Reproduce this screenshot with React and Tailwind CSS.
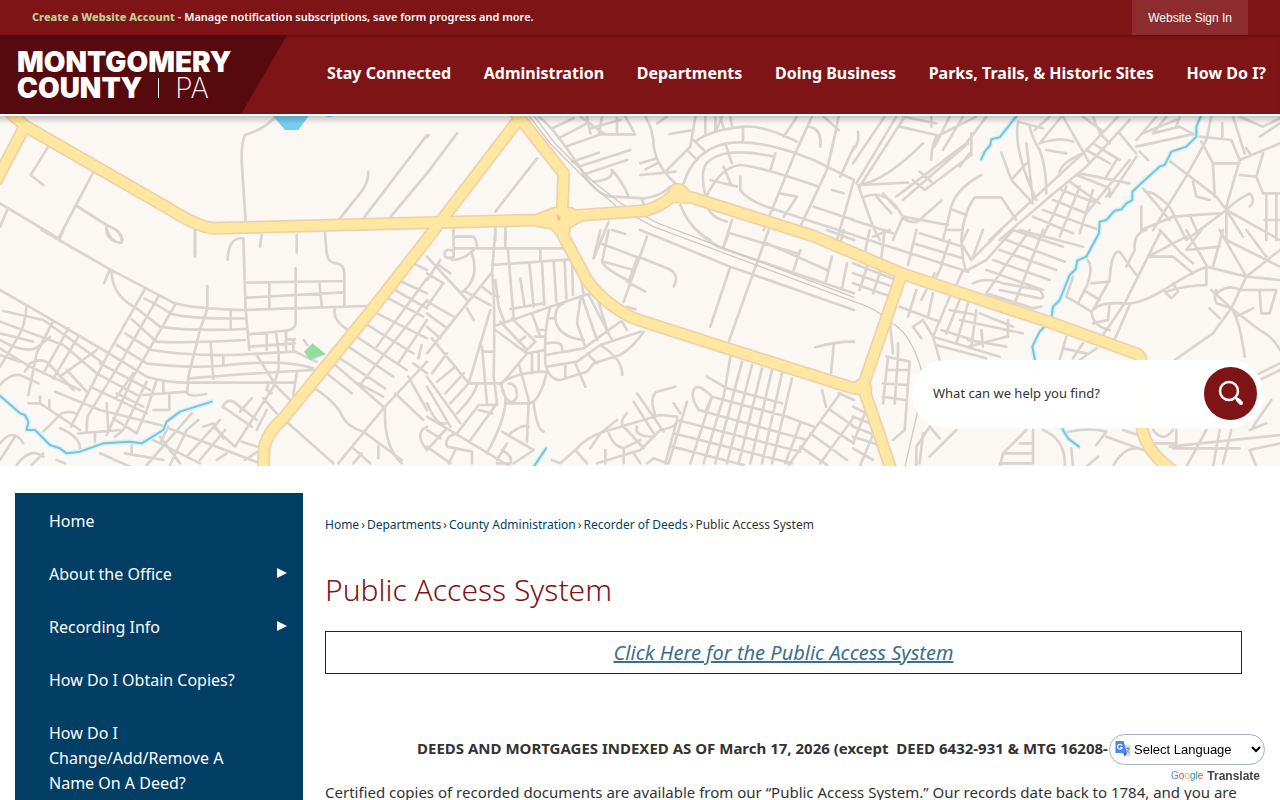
import React, { useState } from 'react';

const navItems = [
    'Stay Connected',
    'Administration',
    'Departments',
    'Doing Business',
    'Parks, Trails, & Historic Sites',
    'How Do I?',
];

const sideItems = [
    { label: 'Home' },
    { label: 'About the Office', hasChildren: true },
    { label: 'Recording Info', hasChildren: true },
    { label: 'How Do I Obtain Copies?' },
    { label: 'How Do I Change/Add/Remove A Name On A Deed?' },
];

const crumbs = ['Home', 'Departments', 'County Administration', 'Recorder of Deeds'];

// The street map is drawn in tiles, each with its own origin
const mapTiles = [
    {
        x: 0,
        y: 0,
        streets: `M145,440L92,525L130,555 M278,520L178,710 M230,618L320,675Q360,690 368,720 M320,680Q315,710 345,725 M0,610L180,718 M22,630L0,680
            M830,345Q800,385 735,405Q722,430 726,500L737,665 M1105,515Q1105,550 1080,580L1020,655 M1281,405L1090,655 M1281,520L1172,650 M585,690V770`,
    },
    {
        x: 1281,
        y: 0,
        streets: `M335,350Q380,380 470,520Q510,590 560,590L650,595Q700,590 730,560 M375,385L440,355 M395,415L480,370 M415,440L530,400L460,350 M435,485L515,458 M455,500L610,450
            M465,525L600,480 M500,545Q560,540 555,510 M555,510Q590,550 605,590 M645,595L650,615 M480,350L490,400 M525,350L515,405 M570,355V400 M490,385L580,360 M525,403H625 M595,350L620,395
            M655,350Q680,390 680,440Q690,500 745,550 M640,490L690,475 M655,508L690,490 M640,525L745,515 M690,370L720,350 M727,402L800,390 M805,350L790,440L720,510 M835,350V400
            M865,350V395 M880,350L890,385 M868,390L885,350 M910,350L915,380 M805,425Q850,390 950,380Q1010,375 1110,425 M948,380V420 M770,550Q800,450 900,430Q1000,415 1160,480L1281,540
            M835,585Q815,500 850,480Q900,440 1040,470 M800,420L830,450 M785,455L810,480 M835,595Q880,500 940,495Q1000,500 1170,558 M895,430L915,490 M890,500L910,550 M850,540L930,560
            M940,530V570Q960,600 1020,620L1140,660L1281,705 M1110,350L1070,410 M1155,350L1100,470L1010,690 M1045,460L1030,510 M1145,380Q1185,385 1180,440 M1235,350L1225,400L1200,510L1120,680
            M1190,350L1235,390 M1281,440L1240,530 M1060,580L1110,590L1070,650 M1160,620L1281,660 M1215,570L1250,580 M1281,540L1230,720 M760,615Q790,690 850,720 M835,585Q835,650 900,665
            M915,660L890,740 M330,475L205,635 M90,400L0,520 M5,405L0,412 M80,685V720 M205,680V720 M235,680V720 M545,665L500,775`,
    },
    {
        x: 2559,
        y: 0,
        streets: `M95,350L0,490 M130,350L10,550 M155,350L20,560 M150,350L250,370 M140,380L250,405 M235,350V380 M15,395Q20,430 0,450 M210,430Q100,540 20,555L165,548 M15,555L60,680L80,720
            M35,590Q90,570 130,620L150,650L120,720 M70,590L115,640 M90,580L130,625 M370,350L250,410Q235,440 235,480 M400,350L340,430L130,590 M290,350L245,440 M330,350L270,450 M355,400V465
            M345,430L150,600 M355,465L215,570L180,540 M200,515L235,545 M320,500L350,460 M385,525Q300,570 290,640L270,720 M265,602L210,650 M0,660L120,700 M150,650L285,675 M285,690H320
            M300,630L340,645 M325,720Q330,640 365,592H445L490,660 M150,655Q190,680 210,650 M495,365Q480,450 550,600 M495,365L570,385 M530,380Q540,420 560,450Q580,500 580,580 M520,430L540,600
            M445,458L475,540L540,610 M475,540L520,490 M795,350L690,460L560,580L410,720 M830,360L700,500L590,590L440,720 M590,350L545,390 M625,350L560,430 M630,350L710,490
            M560,430Q620,410 660,425 M690,350L750,395 M720,350Q735,400 770,430 M580,450L640,460 M620,520Q620,490 690,460 M720,430L800,480 M700,450L770,490 M740,400L770,430 M800,400L850,460
            M870,400L970,360 M850,440L1030,400 M850,470L770,590 M670,525L760,560Q780,570 760,590 M650,545L740,610 M625,570L720,605 M600,600L700,640 M570,630L740,690 M540,650L660,700
            M860,455L885,480 M830,480L700,640 M790,480L760,530 M680,560L620,710 M720,570L680,700 M640,560L570,710 M680,520L830,550 M910,350L850,420 M900,400L980,380L1025,405 M940,350L900,400
            M980,350L970,380 M1040,410L1135,420L1160,480 M1075,350L1060,420L1005,520L900,690 M1045,425L1080,490L1160,490 M1108,370V410 M1140,350L1175,460 M1220,410L1281,370
            M1281,430L1160,480L1120,620 M1180,445L1190,460 M1160,350L1230,380L1281,355 M1230,460L1210,530L1160,525 M1210,530L1230,580H1281 M1240,580V720 M1270,580V720
            M1190,620Q1210,600 1190,580Q1150,600 1120,630L1281,720 M880,575L900,580Q950,610 960,640 M940,475L1090,590L1120,630L1000,720 M1080,490L1085,590 M1020,545L1030,590L1070,600
            M865,620V690 M865,690L960,650L1100,640 M960,640L1000,720 M1010,645L1030,690 M1120,630L1170,710 M1120,630V720 M870,565L950,660 M1235,660H1281`,
    },
    {
        x: 0,
        y: 690,
        streets: `M125,0L330,118L520,218Q570,235 730,240L1100,228 M180,25L190,0 M320,0Q335,40 365,38Q365,10 350,0 M585,0V72 M683,90Q685,20 730,25L737,240L748,360 M780,50L785,15 M890,15V68
            M975,10L980,70Q985,100 1010,100Q1033,105 1033,130V225 M735,158L1033,153 M740,203L1030,187 M808,160V235 M887,115V280Q885,300 850,303L745,313 M958,155L965,230
            M622,168V235L600,300L565,440L562,490Q570,502 618,492 M330,118L312,160 M335,125Q335,190 400,230 M433,180L325,370L213,590 M475,200L360,400L262,560L260,605 M525,225L400,440L320,615
            M0,180L160,272L330,372L440,440Q500,458 565,458H885 M433,205Q500,240 510,250Q560,268 735,265 M410,235L480,290Q570,305 735,297 M395,268L470,335Q560,340 735,330
            M375,310L455,360Q560,378 700,375L885,365L950,395 M350,345L440,400Q560,415 660,408Q850,385 940,415 M570,445L735,432L940,420 M692,240V292 M632,340L640,445 M670,375V405 M748,350L885,340
            M800,310V360 M828,310Q840,380 835,420L820,470L705,650 M858,305V360 M880,330V360 M860,328H885 M770,375L830,470L870,510 M885,365L915,380 M912,330L922,345 M1005,235Q995,270 1045,300
            M10,243L130,270L200,320L310,400 M80,225Q75,290 55,320L0,410 M160,272L110,370L85,495 M205,295L130,430 M235,320L160,445 M290,360L180,440 M0,275L190,345L290,430
            M0,330Q80,375 115,350L150,320 M0,355L90,410L240,480 M0,310L100,335 M0,375L60,395 M90,400Q130,380 150,405L220,480 M90,400L75,425 M200,420L265,490 M0,465Q30,430 60,435L115,460
            M85,520H120V500 M120,520L240,600 M148,510V540 M165,485L300,540L480,585L780,700 M130,605L185,550Q220,540 230,555 M180,595Q240,620 240,655 M235,610L360,600 M320,520L325,600
            M340,565L410,610 M290,430L420,500 M300,400L450,480 M270,470L440,550 M350,490L430,530 M440,455L370,600L345,620 M470,450L440,540L410,610 M490,455V490 M430,495L560,485 M508,490V540H460
            M400,430L350,500 M0,640Q40,590 70,640 M45,620L0,690 M50,705Q90,650 130,680 M95,705L130,670 M170,690L195,700 M285,610V635 M300,670L390,710 M375,670L490,690 M395,645V670
            M440,705L575,550 M480,620L540,700 M450,625L600,700 M510,705L560,600L595,570 M560,680L660,570 M600,690L675,600 M610,590L640,580L670,625 M735,690L810,640 M650,690L680,670
            M505,590L480,640 M668,530Q680,505 700,515L770,570 M705,650L640,590 M668,530L755,590 M755,505L720,545 M790,505L830,550 M800,540L770,600 M725,635L770,650 M890,430L880,495
            M805,460L800,480L815,490 M865,580L1000,700 M945,475Q1010,520 1025,555Q1040,590 1090,605L1205,690 M980,430L1055,490 M1000,400L1150,530 M1281,395L1150,535L1015,700
            M1155,530Q1150,650 1205,700 M1281,210L1080,465 M1281,270L1195,400 M1281,145L1130,350 M1240,100L1281,120 M1205,155L1281,190 M1185,180L1281,235 M1165,205L1270,260 M1120,245L1281,325
            M1095,280L1240,370 M1070,320L1220,420 M1045,350L1180,440 M1020,385L1155,475 M1075,460L1150,500 M1225,440L1281,540 M1265,345L1255,385 M1185,490L1270,570 M1240,400L1281,430
            M1281,590Q1240,610 1281,660 M1060,655L1110,700 M1135,650V685 M1085,670L1060,700`,
    },
    {
        x: 1281,
        y: 690,
        streets: `M205,0L195,130Q205,200 200,440L210,520 M235,0V50 M80,0V55H420 M80,20H140Q150,30 150,55 M80,65Q55,50 52,75Q60,90 80,80V55 M75,90Q110,90 140,60 M135,70Q160,150 100,190
            M195,105L430,88 M243,60L260,265 M340,55V95 M307,100L320,230 M345,100L352,225 M380,95L388,215 M413,95L418,205 M435,90L438,195 M460,140L470,190 M280,145L292,225 M250,237L350,220
            M205,287L370,230L490,190 M192,130L0,370 M0,80L120,210 M45,165L0,230 M70,130L35,105 M40,90L0,150 M0,130L50,160 M165,170L190,190L215,200 M205,150L215,230L230,270 M120,235L140,270
            M115,185L190,225 M0,215L80,260 M0,250L60,295 M0,290L40,325 M15,325L125,460H220 M190,240L125,460 M165,350L180,520 M170,365H200 M205,300L300,370L225,460 M220,275L300,360L325,335L255,265
            M275,335L295,320 M315,250L340,320 M330,300H350 M325,320H355 M370,230Q350,300 355,400Q365,450 400,450L480,425L500,400L580,375Q620,350 650,305 M355,375L470,355L580,275
            M360,410L450,395L520,345L640,305 M370,265H385Q385,225 410,220 M385,265Q390,320 470,330 M460,205L450,280L475,350 M465,200L510,330 M485,195L555,330 M510,200L540,300
            M520,345Q590,390 585,435 M445,400L475,470 M415,405V440 M360,340Q410,330 405,360 M585,275L600,300 M480,370L510,400 M315,370V430 M335,365V420 M300,370L355,360
            M220,460Q270,425 360,425Q340,510 310,520H240 M220,460L235,500Q240,560 180,670 M225,480Q250,540 270,500Q270,460 245,460 M275,400L305,510L300,635 M320,520Q330,600 350,605
            M0,440L100,580 M0,470L70,590 M0,520Q30,590 55,580 M60,370L15,430 M85,410L30,455 M110,430L55,490 M125,460L70,520 M150,465Q140,500 90,550 M210,520L130,630 M155,525H210 M155,540L195,550
            M155,525L90,610 M0,560L200,680L250,710 M55,600L0,660 M90,610Q50,620 60,650L135,665V700 M85,660L65,700 M0,650L70,700 M0,600L40,625 M225,605L320,660L260,700 M250,610Q290,580 305,590
            M225,660Q260,680 250,700L210,700 M240,640L210,690 M520,0L500,85 M545,0L525,95Q530,115 610,155 M520,40L640,85 M555,0L595,12 M660,20L590,215 M635,80L720,115Q760,130 740,170
            M530,95L620,120 M630,85L605,155 M600,155L655,185 M600,230L625,238 M640,0L910,110L1281,240 M810,0Q850,45 900,60L1281,190 M910,110L850,290 M1025,0L905,335 M905,10L890,50
            M1120,60L1100,120 M1215,80L1195,160 M1260,100L1245,175 M1020,40L1200,120 M910,10L1110,70 M1165,352Q1220,335 1281,335 M1220,345L1212,430 M1200,0L1281,30 M1250,0L1240,40
            M910,380L890,500 M945,395L865,700 M975,405L900,700 M1005,415L935,700 M1035,420L970,700 M1065,430L1005,700 M1095,445L1035,700 M1120,580L1075,700 M890,500L830,700 M855,500L790,700
            M840,440L900,475L1065,520 M855,500L1080,560L1160,590 M815,540L1140,630 M750,570L1120,665 M740,610L1095,700 M735,650L950,705 M800,480Q810,455 855,500L835,545L815,540Q790,500 800,480
            M780,515L725,700 M750,570L715,700 M740,520L760,550 M745,470L690,485Q665,500 685,555 M630,490L710,605 M620,515L680,610 M445,660Q480,620 530,605L700,555L750,560Q760,590 700,600L640,660L510,700
            M445,660L480,700 M445,660L400,700L375,690 M570,570L520,610L490,655 M600,550Q570,580 600,600L650,655 M545,610Q560,650 590,655L640,630 M535,660V700 M590,655V700
            M630,590Q620,620 680,620 M660,700L680,685L720,700 M620,670L640,700 M1185,480L1197,530 M1240,490L1085,705 M1281,560L1180,700 M1281,510L1235,490 M1210,540L1281,590 M1180,575L1281,640
            M1150,610L1260,690 M1120,650L1200,705`,
    },
    {
        x: 2559,
        y: 690,
        streets: `M50,0L35,70 M95,0L85,85 M190,0L165,105 M0,15L345,125 M180,40L330,85 M200,10L330,50 M110,0L60,20 M345,0L325,40L355,90L445,0 M325,30Q330,110 340,120 M390,0L360,80
            M345,120L400,90L480,0 M290,30L265,105 M480,0L630,50 M500,0L690,50 M460,30L635,95 M440,60L610,120 M420,90L590,150 M400,120L570,180 M360,160Q400,140 450,160L560,180Q580,205 560,205L440,180
            M570,0L485,220 M530,0L400,190 M400,190L540,235L565,230 M265,110L250,140 M330,120L310,165 M0,100L130,150 M0,130L120,170 M0,160L115,200 M45,100L20,180 M85,115L60,190 M245,130L205,210
            M190,180L165,260 M240,190L225,260 M290,200L240,320 M320,210L280,310 M345,220L310,340 M140,230L260,275 M110,270L120,370 M210,270L180,290L205,325 M210,270L240,320L260,390
            M240,320L440,380 M250,345L400,385 M265,300L360,330 M370,240L355,350 M320,270L510,310 M380,250L480,290 M345,350L460,320 M345,330L460,350 M385,300L390,350 M465,270V320 M290,240L370,255
            M100,380L170,395L155,600L120,630 M105,380L90,520 M135,340V380L125,520 M100,420H165 M90,460L160,465 M90,500L155,510 M700,85Q725,110 700,170L675,220 M660,140L640,200L715,245
            M700,185L740,210 M715,160L770,155 M770,150Q775,60 800,65L850,135 M880,0Q840,10 845,60L820,110 M920,10L815,220L740,330 M720,240Q740,215 815,220Q860,225 940,175Q1010,130 1060,110L1180,140L1281,150
            M770,150L720,240 M770,220L765,270L720,280 M715,245Q720,290 770,300 M830,225L780,340 M1000,20L885,80H960L1020,130 M920,0L985,70L1020,100 M1000,0L1060,105 M1110,0L1080,110
            M1100,0L1180,140 M1045,0L1000,60L1100,50 M1281,60L1180,140L1135,235L1080,310L965,390 M930,180L955,205L975,185L960,160 M1060,110V165Q1000,165 940,185 M1075,180L1135,235
            Q1160,270 1175,380 M1135,235L1220,300Q1260,320 1281,360 M1090,190Q1130,160 1160,180H1270 M1135,235L1090,220Q1080,190 1090,180 M1070,235L1100,265 M1150,260L1200,235
            M1220,185L1225,250H1250L1270,180 M1281,400L1200,440 M1281,420L1220,450 M1120,30L1281,110 M1180,0L1240,80 M640,320L620,390 M630,355L700,370 M690,340L660,385 M730,355L680,390
            M230,590L190,650V710 M310,600L230,680 M200,700L210,610 M230,590L260,625 M540,600V700 M570,600Q640,630 635,710 M440,710L450,670L520,600 M440,700H540 M455,670H540 M500,640H540
            M655,655L660,710 M630,610Q700,590 760,605L730,645 M760,620L870,660 M810,600L885,625 M700,710L735,680 M780,710Q810,650 860,655 M900,600Q930,640 960,600 M900,640H970V600
            M950,650L1281,615 M1000,710L1060,600 M1080,710L1100,600 M1135,600L1110,700 M960,655H1160 M1190,660L1281,640 M1190,660L1210,710 M1255,510L1200,590 M1190,600L1240,580
            M0,530L60,560 M0,560L80,590 M0,590L80,620 M0,620L95,650 M0,655L60,690 M40,540L0,640 M70,590L20,710`,
    },
];

const highways = [
    'M0,310L75,378L500,622Q590,680 640,685L1280,668L1610,660L1680,650L1935,632Q1985,617 2010,594L2031,584L2080,594L2440,708L2704,820L3159,970L3412,1062Q3424,1070 3424,1090V1260Q3424,1350 3530,1420',
    'M75,378L-10,540',
    'M1540,330L1691,520L1686,650L1691,710L1761,840Q1810,910 1901,955L2181,1045L2562,1165L2589,1158L2704,825',
    'M1551,365L1310,680L1115,930L850,1255Q798,1300 792,1350L790,1410',
    'M2589,1160L2674,1410',
];

// Widened patches where highways meet
const junctions = [
    'M1611,646L1662,626H1714L1740,640V662L1708,680L1703,706H1675L1656,684L1611,676Z',
    'M2004,602Q2006,555 2032,554Q2056,556 2070,584L2062,606Z',
    'M2563,1150L2590,1135L2612,1162L2606,1182L2570,1180Z',
];

const rivers = [
    'M0,1187L60,1240L75,1245L85,1265L80,1290H105L150,1335L180,1345L200,1360L240,1355L310,1330L390,1325L425,1330L490,1290L500,1265L540,1235L635,1205',
    'M1638,1345L1600,1402',
    'M3052,345L2999,412L2974,418L2971,435L2954,455L2944,478',
    'M3604,345L3589,380V410L3559,440L3514,455L3494,495L3481,498L3424,550L3397,575V600L3379,610L3364,628L3344,632L3319,660L3299,665L3297,700L3259,770L3232,782L3227,808L3209,825L3179,900L3159,920L3154,960L3119,995L3097,1040L3105,1080L3189,1290L3204,1315L3237,1340',
];

const StreetMap = () => (
    <svg
        viewBox="0 348 3840 1050"
        preserveAspectRatio="xMidYMid slice"
        className="block h-[350px] w-full bg-[#fbf7f2]"
        fill="none"
        strokeLinecap="round"
        strokeLinejoin="round"
        aria-hidden="true"
    >
        {mapTiles.map((tile) => (
            <path
                key={`${tile.x}-${tile.y}`}
                transform={`translate(${tile.x} ${tile.y})`}
                d={tile.streets}
                stroke="#d9d4d0"
                strokeWidth="8"
            />
        ))}
        {/* railway */}
        <path
            d="M1585,345L1650,430L1765,545L1850,620L1960,680L2562,905Q2640,930 2665,965Q2730,990 2764,1110M2754,1230L2715,1400"
            stroke="#cfcac6"
            strokeWidth="4"
        />
        <path d="M1600,345L1665,430L1780,545L1865,612L1975,670L2562,892" stroke="#cfcac6" strokeWidth="4" />
        <path d="M812,340L855,390H895L932,340Z" fill="#74cdf0" />
        <path d="M960,345L990,352L1015,345Z" fill="#74cdf0" />
        <path d="M937,1030L978,1063L930,1080L912,1055Z" fill="#95dca0" />
        {rivers.map((d) => (
            <path key={d} d={d} stroke="#d3f1f7" strokeWidth="14" />
        ))}
        {rivers.map((d) => (
            <path key={d} d={d} stroke="#7cc4dc" strokeWidth="6" />
        ))}
        {highways.map((d) => (
            <path key={d} d={d} stroke="#f2cfa8" strokeWidth="39" />
        ))}
        {junctions.map((d) => (
            <path key={d} d={d} stroke="#f2cfa8" strokeWidth="12" />
        ))}
        {highways.map((d) => (
            <path key={d} d={d} stroke="#fee8a1" strokeWidth="29" />
        ))}
        {junctions.map((d) => (
            <path key={d} d={d} fill="#fee8a1" stroke="#fee8a1" strokeWidth="2" />
        ))}
        <path d="M1672,645L1680,653L1676,662Z" fill="#edc18b" stroke="#edc18b" strokeWidth="4" />
    </svg>
);

const TranslateIcon = () => (
    <svg viewBox="0 0 16 16" className="h-4 w-4" aria-hidden="true">
        <path d="M6 4h9.500v11.500H9z" fill="#dadce0" />
        <path d="M0.500 0h8l3.500 12h-11.500z" fill="#4a86f0" />
        <path d="M8.500 12h3.500l-2.500 3.500z" fill="#3457b8" />
        <path d="M7 4.500A2.400 2.400 0 1 0 7.200 6.500H5" fill="none" stroke="#fff" strokeWidth="1.100" />
        <path d="M10.500 7.500h4.500M12.700 6.500v1M14.200 7.500c-.5 2-1.500 3-3 4M11.500 9c.8 1.200 1.700 2 3 2.800" fill="none" stroke="#7b8a9a" strokeWidth="0.900" />
    </svg>
);

const Header = () => (
    <header className="border-b-2 border-white bg-[#7f1416] text-white">
        <div className="flex h-[35px] items-stretch justify-between pl-8 pr-8">
            <p className="flex items-center whitespace-pre text-[11px] font-semibold">
                <a href="#account" className="font-extrabold text-[#b9d294]">Create a Website Account</a>
                {' - Manage notification subscriptions, save form progress and more.'}
            </p>
            <button type="button" className="bg-[#8c2c2e] px-4 font-['Liberation_Sans',sans-serif] text-xs">
                Website Sign In
            </button>
        </div>
        <div className="flex h-[79px] items-stretch shadow-[inset_0_3px_3px_-1px_rgba(0,0,0,0.18)]">
            <a
                href="#home"
                className="flex w-[287px] shrink-0 flex-col justify-center bg-[#560a0d] pl-[17px] font-['Inter',sans-serif] text-[28px] leading-[26px] font-black [clip-path:polygon(0_0,100%_0,84%_100%,0_100%)]"
            >
                <span>MONTGOMERY</span>
                <span className="flex items-center">
                    COUNTY
                    <span className="mx-4 h-5 w-px bg-white" />
                    <span className="font-extralight">PA</span>
                </span>
            </a>
            <nav className="flex flex-1 items-center justify-between pr-[14px] pb-1 pl-10 text-base font-bold whitespace-nowrap">
                {navItems.map((item) => (
                    <a key={item} href="#nav">{item}</a>
                ))}
            </nav>
        </div>
    </header>
);

const Hero = () => {
    const [query, setQuery] = useState('');

    return (
        <section className="relative">
            <StreetMap />
            <div className="absolute inset-x-0 top-0 h-2 bg-linear-to-b from-black/20 to-transparent" />
            <form
                className="absolute right-4 bottom-[38px] flex h-[68px] w-[352px] items-center rounded-full bg-white/97 pr-[7px] pb-[2px] pl-[21px]"
                onSubmit={(e) => e.preventDefault()}
            >
                <input
                    type="text"
                    aria-label="Search"
                    placeholder="What can we help you find?"
                    value={query}
                    onChange={(e) => setQuery(e.target.value)}
                    className="min-w-0 flex-1 bg-transparent pt-[2px] text-[13px] text-[#333] outline-none placeholder:text-[#333]"
                />
                <button
                    type="submit"
                    aria-label="Search"
                    className="flex h-[53px] w-[53px] items-center justify-center rounded-full bg-[#7f1416]"
                >
                    <svg viewBox="0 0 26 26" className="h-[26px] w-[26px]" fill="none" stroke="#fff" strokeLinecap="round">
                        <circle cx="11" cy="11" r="9" strokeWidth="2.500" />
                        <path d="M18 18l1.500 1.500" strokeWidth="2.500" />
                        <path d="M20 20l3 3" strokeWidth="4" />
                    </svg>
                </button>
            </form>
        </section>
    );
};

const SideNav = () => (
    <nav className="w-[288px] shrink-0 bg-[#033e64] pt-[2px] text-white">
        <ul>
            {sideItems.map((item) => (
                <li key={item.label}>
                    <a href="#section" className="flex items-center justify-between py-[14px] pr-4 pl-[34px] text-base leading-[25px]">
                        <span className="max-w-[190px]">{item.label}</span>
                        {item.hasChildren && (
                            <svg viewBox="0 0 10 10" className="mb-1 h-[10px] w-[10px]" fill="#fff" aria-hidden="true">
                                <path d="M0 0l10 5-10 5z" />
                            </svg>
                        )}
                    </a>
                </li>
            ))}
        </ul>
    </nav>
);

const TranslateWidget = () => (
    <div className="fixed right-[15px] bottom-4 flex flex-col items-end font-['Liberation_Sans',sans-serif]">
        <div className="relative">
            <select
                aria-label="Select Language"
                defaultValue=""
                className="h-[31px] w-[156px] rounded-full border border-[#a3b1c6] bg-white pr-0 pl-5 text-[13px] text-black"
            >
                <option value="">Select Language</option>
                <option value="es">Spanish</option>
            </select>
            <span className="pointer-events-none absolute top-[7px] left-[6px]">
                <TranslateIcon />
            </span>
        </div>
        <p className="mt-[3px] flex h-4 items-center gap-1 pr-[5px] text-xs font-bold text-[#444]">
            <span className="text-[10px] font-normal">
                <span className="text-[#4285f4]">G</span>
                <span className="text-[#ea4335]">o</span>
                <span className="text-[#fbbc05]">o</span>
                <span className="text-[#4285f4]">g</span>
                <span className="text-[#34a853]">l</span>
                <span className="text-[#ea4335]">e</span>
            </span>
            Translate
        </p>
    </div>
);

const App = () => (
    <div className="min-h-screen bg-white font-['Noto_Sans',sans-serif] text-[#333]">
        <Header />
        <Hero />
        <div className="flex items-stretch gap-[22px] px-[15px] pt-[27px]">
            <SideNav />
            <main className="min-w-0 flex-1 pr-[23px]">
                <p className="mt-6 flex gap-[2px] text-xs leading-4">
                    {crumbs.map((crumb) => (
                        <React.Fragment key={crumb}>
                            <a href="#crumb" className="text-[#033e64]">{crumb}</a>
                            <span>›</span>
                        </React.Fragment>
                    ))}
                    <span>Public Access System</span>
                </p>
                <h1 className="mt-9 text-3xl leading-[42px] font-light text-[#7f1416]">Public Access System</h1>
                <div className="mt-5 flex h-[43px] items-center justify-center border border-[#222]">
                    <a href="#system" className="text-xl leading-6 text-[#3b6e8f] italic underline">
                        Click Here for the Public Access System
                    </a>
                </div>
                <p className="mt-[62px] pl-[92px] text-[15px] leading-6 font-bold whitespace-pre">
                    {'DEEDS AND MORTGAGES INDEXED AS OF March 17, 2026 (except  DEED 6432-931 & MTG 16208-'}
                </p>
                <p className="mt-5 overflow-hidden text-[15px] leading-6 whitespace-nowrap">
                    Certified copies of recorded documents are available from our “Public Access System.” Our records date back to 1784, and you are
                </p>
            </main>
        </div>
        <TranslateWidget />
    </div>
);

export default App;
